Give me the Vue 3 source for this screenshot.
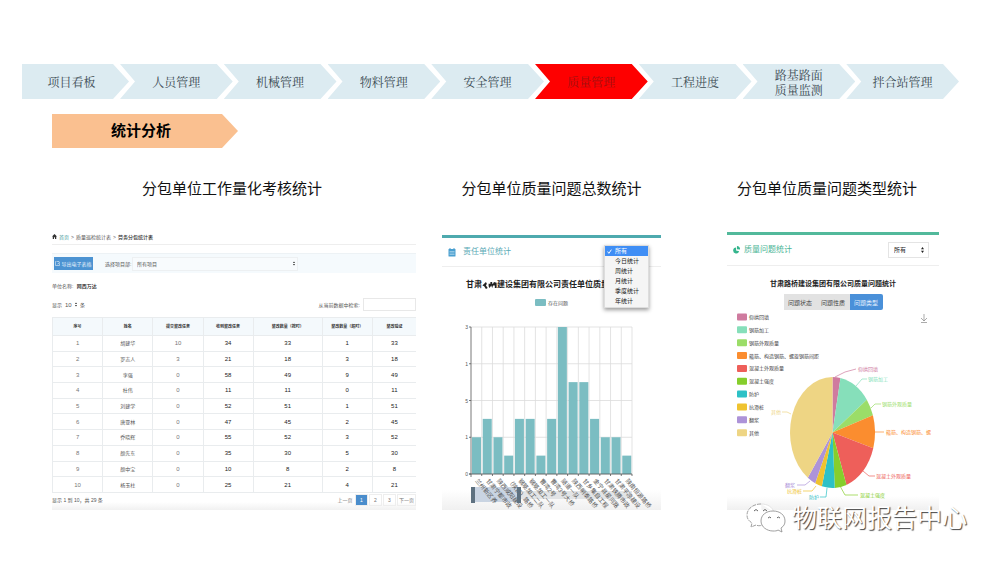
<script setup>
const nav = [
  { lines: ['项目看板'] },
  { lines: ['人员管理'] },
  { lines: ['机械管理'] },
  { lines: ['物料管理'] },
  { lines: ['安全管理'] },
  { lines: ['质量管理'], active: true },
  { lines: ['工程进度'] },
  { lines: ['路基路面', '质量监测'] },
  { lines: ['拌合站管理'] }
]

const headers = ['序号', '姓名', '提交整改任务', '收到整改任务', '整改数量（按时）', '整改数量（超时）', '整改验证']
const rows = [
  [1, '胡建华', 10, 34, 33, 1, 33],
  [2, '罗志人', 3, 21, 18, 3, 18],
  [3, '李强', 0, 58, 49, 9, 49],
  [4, '杜伟', 0, 11, 11, 0, 11],
  [5, '刘建学', 0, 52, 51, 1, 51],
  [6, '唐亚林', 0, 47, 45, 2, 45],
  [7, '乔晓辉', 0, 55, 52, 3, 52],
  [8, '颜先东', 0, 35, 30, 5, 30],
  [9, '颜中宝', 0, 10, 8, 2, 8],
  [10, '杨玉柱', 0, 25, 21, 4, 21]
]

const periods = ['所有', '今日统计', '周统计', '月统计', '季度统计', '年统计']

const names = ['兰州新区养', '甘肃宁都市政', '陕西咸阳建设', '（陕西）路桥', '钢筋加工二队', '钢筋加工一队', '曹湾2号', '曹湾3号大桥', '隧道一队', '陕西明泰路桥', '甘乡集自工程', '金宁县星河路', '甘肃铁腾市政', '甘肃平凉建设', '陕南恒源路桥']
const values = [2, 3, 2, 1, 3, 3, 1, 3, 8, 5, 5, 3, 2, 2, 1]
const slot = 161 / 15
const unit = 147 / 8
const bars = values.map((v, i) => ({
  x: 29 + i * slot + 1,
  y: 154 - v * unit,
  h: v * unit,
  name: names[i],
  tx: 29 + i * slot + 4
}))
const ticks = [
  { y: 7, t: '3' },
  { y: 43.75, t: '1' },
  { y: 80.5, t: '5' },
  { y: 117.25, t: '1' },
  { y: 154, t: '0' }
]

const slices = [
  { n: '仰拱回填', c: '#cf7b9f', to: 10.8, x: 131, y: 61, line: '108,67 118,62 129,59' },
  { n: '钢筋加工', c: '#86dfba', to: 53.8, x: 141, y: 71, line: '129,76 135,69 140,69' },
  { n: '钢筋外观质量', c: '#9bdd68', to: 72, x: 155, y: 96, line: '144,98 148,94 154,94' },
  { n: '箍筋、构造钢筋、螺旋钢筋间距', label: '箍筋、构造钢筋、螺', c: '#fb8d2f', to: 106.5, x: 159, y: 124, line: '148,122 157,122' },
  { n: '混凝土外观质量', c: '#ee5f5a', to: 160.8, x: 149, y: 168, line: '136,161 142,166 148,166' },
  { n: '混凝土强度', c: '#86ce2c', to: 177, x: 133, y: 187, line: '113,176 118,185 131,185' },
  { n: '防护', c: '#2dc1c6', to: 194.5, x: 82, y: 189, line: '100,178 99,187 93,187' },
  { n: '抗滑桩', c: '#efc330', to: 204, x: 60, y: 183, line: '89,176 85,181 76,181' },
  { n: '翻浆', c: '#ad93d8', to: 215.5, x: 58, y: 177, line: '83,171 78,175 70,175' },
  { n: '其他', c: '#eed584', to: 360, x: 44, y: 104, line: '64,104 60,102 55,102' }
]
const at = (deg) => {
  const r = (deg * Math.PI) / 180
  return `${(105.5 + 42.5 * Math.sin(r)).toFixed(2)} ${(122.5 - 55.5 * Math.cos(r)).toFixed(2)}`
}
slices.forEach((s, i) => {
  const from = i ? slices[i - 1].to : 0
  s.d = `M105.5 122.5L${at(from)}A42.5 55.5 0 ${s.to - from > 180 ? 1 : 0} 1 ${at(s.to)}Z`
})
</script>

<template>
  <main class="page">
    <nav>
      <ul class="steps">
        <li v-for="(s, i) in nav" :key="i" class="step" :class="{ active: s.active, first: i === 0 }">
          <a href="#"><span v-for="l in s.lines" :key="l">{{ l }}</span></a>
        </li>
      </ul>
    </nav>
    <h1 class="tag">统计分析</h1>

    <div class="columns">
      <section class="left">
        <h2>分包单位工作量化考核统计</h2>
        <div class="work">
          <div class="crumbs">
            <svg class="home" viewBox="0 0 10 10"><path d="M5 0L10 5H8.500V10H6V6.500H4V10H1.500V5H0Z" fill="#333" /></svg>
            <a href="#">首页</a><span>&gt;</span><span>质量巡检统计表</span><span>&gt;</span><b>劳务分包统计表</b>
          </div>
          <div class="toolbar">
            <button class="export" type="button">
              <svg viewBox="0 0 10 10"><path d="M3 1H1V9H9V5M4 1H8L9 4L5 6" fill="none" stroke="#fff" /></svg>导出电子表格
            </button>
            <label for="project">选择项目部:</label>
            <div class="pick">
              <select id="project"><option>所有项目</option></select>
              <svg viewBox="0 0 4 8"><path d="M2 0L4 3H0ZM2 8L0 5H4Z" fill="#222" /></svg>
            </div>
          </div>
          <p class="unit">单位名称: <b>网西万达</b></p>
          <div class="filter">
            <label class="len">显示
              <select><option>10</option></select>
              <svg viewBox="0 0 4 8"><path d="M2 0L4 3H0ZM2 8L0 5H4Z" fill="#222" /></svg>
              条</label>
            <label class="search">从当前数据中检索: <input type="text" /></label>
          </div>
          <table>
            <thead><tr><th v-for="h in headers" :key="h">{{ h }}</th></tr></thead>
            <tbody>
              <tr v-for="r in rows" :key="r[0]"><td v-for="(c, i) in r" :key="i">{{ c }}</td></tr>
            </tbody>
          </table>
          <div class="foot">
            <span>显示 1 到 10，共 29 条</span>
            <div class="pager">
              <button type="button" class="plain">上一页</button>
              <button type="button" class="on">1</button>
              <button type="button">2</button>
              <button type="button">3</button>
              <button type="button" class="wide">下一页</button>
            </div>
          </div>
        </div>
      </section>

      <section class="mid">
        <h2>分包单位质量问题总数统计</h2>
        <div class="card teal">
          <header>
            <svg class="ico" viewBox="0 0 16 18"><rect x="1" y="2" width="14" height="15" rx="1" fill="#4a9fd0" /><path d="M4 0V4M12 0V4" stroke="#4a9fd0" stroke-width="2" /><path d="M3 7H13M3 10H13M3 13H13" stroke="#d8edf7" /></svg>
            <h3>责任单位统计</h3>
            <select class="under" aria-label="统计周期"><option>所有</option></select>
            <ul class="menu" role="listbox" aria-label="统计周期">
              <li v-for="(p, i) in periods" :key="p" role="option" :aria-selected="i === 0">
                <svg viewBox="0 0 8 8"><path v-if="i === 0" d="M1 4L3 7L7 1" fill="none" stroke="#fff" stroke-width="1.500" /></svg>{{ p }}
              </li>
            </ul>
          </header>
          <h4>甘肃<svg class="smudge" viewBox="0 0 16 9"><path d="M0 5L4 1L5 3L4 5L6 8L4 9L2 6ZM7 3H9V1H11V3H12L13 1L16 2V8H14V5H12L11 8L10 5L8 8L7 6Z" fill="#222" /></svg>建设集团有限公司责任单位质量</h4>
          <p class="key"><i></i>存在问题</p>
          <svg class="chart" viewBox="0 0 219 190">
            <g stroke="#dcdcdc" stroke-width="0.800">
              <path v-for="t in ticks" :key="t.y" :d="`M29 ${t.y}H190`" />
              <path v-for="n in 15" :key="n" :d="`M${29 + n * slot} 7V154`" />
            </g>
            <rect v-for="b in bars" :key="b.name" :x="b.x" :y="b.y" width="9" :height="b.h" fill="#7bbdc2" />
            <path d="M29 7V157M27 154H190" stroke="#555" stroke-width="0.800" />
            <g stroke="#555" stroke-width="0.800">
              <path v-for="t in ticks" :key="t.y" :d="`M27 ${t.y}H29`" />
              <path v-for="n in 15" :key="n" :d="`M${29 + n * slot} 154V156`" />
            </g>
            <text v-for="t in ticks" :key="t.y" x="26" :y="t.y + 2" text-anchor="end" class="num">{{ t.t }}</text>
            <rect x="29" y="171" width="161" height="8" fill="#e2e4e6" />
            <rect x="31" y="167" width="46" height="15" fill="#c9d4e2" />
            <text v-for="b in bars" :key="b.name" class="name" :transform="`translate(${b.tx} 161) rotate(50)`">{{ b.name }}</text>
            <rect x="29" y="167" width="4" height="16" fill="#5e7180" />
            <rect x="75" y="167" width="4" height="16" fill="#5e7180" />
          </svg>
        </div>
      </section>

      <section class="right">
        <h2>分包单位质量问题类型统计</h2>
        <div class="card green">
          <header>
            <svg class="pieico" viewBox="0 0 16 18"><path d="M7 3A7 7 0 1 0 14 12L7 10Z" fill="#35b58d" /><path d="M9 0A7 7 0 0 1 16 8L9 7.500Z" fill="#35b58d" /></svg>
            <h3>质量问题统计</h3>
            <div class="range">
              <select aria-label="范围"><option>所有</option></select>
              <svg viewBox="0 0 4 8"><path d="M2 0L4 3H0ZM2 8L0 5H4Z" fill="#222" /></svg>
            </div>
          </header>
          <h4>甘肃路桥建设集团有限公司质量问题统计</h4>
          <div class="tabs">
            <button type="button">问题状态</button><button type="button">问题性质</button><button type="button" class="on">问题类型</button>
          </div>
          <svg class="pie" viewBox="0 0 212 200">
            <path d="M197 4V11M194 8L197 11L200 8M194 12.500H200" fill="none" stroke="#888" stroke-width="0.700" />
            <g v-for="(s, i) in slices" :key="s.n">
              <rect x="10" :y="3.500 + i * 12.850" width="10" height="7" rx="1" :fill="s.c" />
              <text x="22" :y="9 + i * 12.850" fill="#444">{{ s.n }}</text>
              <path :d="s.d" :fill="s.c" />
              <polyline :points="s.line" fill="none" :stroke="s.c" stroke-width="0.700" />
              <text :x="s.x" :y="s.y" :fill="s.c">{{ s.label || s.n }}</text>
            </g>
          </svg>
        </div>
      </section>
    </div>

    <div class="mark">
      <svg viewBox="0 0 40 30">
        <g fill="#fff" stroke="#888" stroke-width="0.800">
          <path d="M15 1C7 1 1 6 1 12C1 16 3 18 6 20L5 24L10 22C12 23 14 23 17 22" stroke-dasharray="4 1" />
          <path d="M15 1C22 1 26 4 28 9" stroke="#ddd" />
          <path d="M27 8C20 8 15 12 15 18C15 24 21 28 27 28C29 28 31 28 32 27L36 29L35 25C38 23 39 21 39 18C39 12 34 8 27 8Z" />
        </g>
        <path d="M8 8Q10 5 12 8M17 8Q19 5 21 8M22 15Q24 13 25 15M31 15Q32 13 34 15" fill="none" stroke="#666" />
      </svg>
      <span>物联网报告中心</span>
    </div>
  </main>
</template>

<style>
body { margin: 0; background: #fff; }
</style>

<style scoped>
* { box-sizing: border-box; }
.page {
  position: relative;
  min-height: 100vh;
  padding-top: 64px;
  font-family: "Liberation Sans", "Noto Sans CJK SC", sans-serif;
  color: #222;
}
h1, h2, h3, h4, p, ul { margin: 0; padding: 0; }
ul { list-style: none; }
a { color: inherit; text-decoration: none; }
button, select, input { font: inherit; color: inherit; margin: 0; padding: 0; border: 0; border-radius: 0; background: none; appearance: none; }
svg { display: block; flex: none; }

.steps { display: flex; padding: 0 41px 0 22px; }
.step { flex: 1; height: 35px; margin-right: -9px; background: #dcebf1; clip-path: polygon(0 0, calc(100% - 16px) 0, 100% 50%, calc(100% - 16px) 100%, 0 100%, 15px 50%); }
.step:last-child { margin-right: 0; }
.step.first { flex: 0 0 107px; clip-path: polygon(0 0, calc(100% - 16px) 0, 100% 50%, calc(100% - 16px) 100%, 0 100%); }
.step a { height: 100%; display: flex; flex-direction: column; align-items: center; justify-content: center; font: 12px/15px "Noto Serif CJK SC", "Noto Sans CJK SC", serif; color: #3a4a52; }
.step.first a { padding-right: 8px; }
.step.active { background: #fe0000; }
.step.active a { color: #a01010; }

.tag { width: 186px; height: 34px; margin: 15px 0 0 52px; padding-right: 8px; background: #fac090; clip-path: polygon(0 0, calc(100% - 16px) 0, 100% 50%, calc(100% - 16px) 100%, 0 100%); font-size: 15px; line-height: 34px; text-align: center; color: #000; }

.columns { display: grid; grid-template-columns: 364fr 219fr 252fr; column-gap: 26px; padding: 0 61px 0 52px; margin-top: 31px; }
.right { padding-left: 40px; }
h2 { font-size: 15px; line-height: 20px; font-weight: 400; text-align: center; white-space: nowrap; color: #111; }
.left h2 { padding-right: 4px; }
.right h2 { padding-right: 12px; }

.work { margin-top: 30px; padding-bottom: 4px; font-size: 5px; line-height: 12px; color: #555; background: linear-gradient(#fff, #f1f1f1) bottom / 100% 8px no-repeat; }
.crumbs { height: 16px; display: flex; align-items: center; gap: 2px; border-bottom: 1px solid #eee; }
.crumbs b { color: #333; font-weight: 500; }
.crumbs a { color: #3f9a9a; }
.home { width: 5px; height: 5px; }
.toolbar { margin-top: 8px; height: 20px; padding-left: 2px; display: flex; align-items: center; background: #f5fafd; border-top: 1px solid #edf2f5; }
.export { width: 39px; height: 13px; display: flex; align-items: center; justify-content: center; gap: 1px; background: #4c93d2; color: #e8f3fc; }
.export svg { width: 5px; height: 5px; }
.toolbar label { margin-left: 12px; width: 27px; white-space: nowrap; }
.pick { flex: 1; display: flex; align-items: center; height: 14px; margin-right: 118px; padding: 0 2px 0 4px; border: 1px solid #edf0f2; background: #f8fbfd; }
.pick select { flex: 1; }
.pick svg, .len svg { width: 2px; height: 5px; }
.unit { margin-top: 7px; }
.unit b { margin-left: 2px; font-weight: 500; color: #222; }
.filter { margin-top: 6px; height: 13px; display: flex; justify-content: space-between; align-items: center; }
.len, .search { display: flex; align-items: center; gap: 3px; }
.len select { width: 7px; font-size: 6px; }
.search input { width: 53px; height: 13px; border: 1px solid #e8e8e8; }
table { width: 100%; height: 176px; margin-top: 6px; table-layout: fixed; border-collapse: collapse; line-height: 8px; text-align: center; }
th, td { padding: 0; border: 1px solid #e9ecee; }
th { height: 18px; font-size: 4px; color: #333; background: #f4f9fc; white-space: nowrap; }
th:nth-child(4) { width: 50px; }
th:nth-child(5) { width: 19%; }
th:nth-child(7) { width: 12%; }
td { font-size: 6px; color: #222; }
td:nth-child(-n+3) { color: #777; }
td:nth-child(2) { font-size: 5px; color: #555; }
tr > :last-child { border-right: 0; }
.foot { margin-top: 1px; height: 12px; display: flex; align-items: center; justify-content: space-between; }
.pager { display: flex; gap: 1px; color: #777; }
.pager button { width: 13px; height: 12px; border: 1px solid #eee; line-height: 10px; }
.pager .plain { width: 18px; border: 0; }
.pager .wide { width: 19px; }
.pager .on { background: #4a8dcc; color: #fff; }

.card header { position: relative; display: flex; align-items: center; border-bottom: 1px solid #eee; }
h3 { font-size: 8px; line-height: 12px; font-weight: 400; }
h4 { font-weight: 700; line-height: 12px; white-space: nowrap; }
.teal { margin-top: 36px; border-top: 3px solid #4eaaae; background: linear-gradient(#fff, #f0f0f0) bottom / 100% 20px no-repeat; }
.teal header { height: 29px; padding: 0 12px 0 6px; }
.ico { width: 8px; height: 9px; }
.teal h3 { margin-left: 7px; flex: 1; color: #58a9b5; }
.under { width: 42px; height: 12px; font-size: 6px; }
.menu { position: absolute; top: 7px; right: 12px; width: 45px; padding: 0 0 1px; background: #f5f5f5; border: 1px solid #ddd; box-shadow: 0 2px 4px rgba(0, 0, 0, .4); font-size: 6px; line-height: 10px; color: #222; z-index: 1; }
.menu li { display: flex; align-items: center; gap: 3px; padding-left: 2px; }
.menu svg { width: 5px; height: 5px; }
.menu li:first-child { background: #3f8ef5; color: #fff; }
.teal h4 { display: flex; align-items: center; margin: 12px 0 0 24px; font-size: 8px; color: #222; }
.smudge { width: 15px; height: 8px; }
.key { display: flex; align-items: center; justify-content: center; gap: 2px; height: 12px; margin-top: 5px; font-size: 5px; color: #555; }
.key i { width: 11px; height: 7px; border-radius: 1px; background: #7bbdc2; }
.chart { width: 100%; margin-top: 12px; overflow: visible; }
.num { font-size: 5px; fill: #555; }
.name { font-size: 6px; fill: #555; }

.green { margin-top: 33px; border-top: 3px solid #52b99b; background: linear-gradient(#fff, #f0f0f0) bottom / 100% 14px no-repeat; }
.green header { height: 31px; padding: 0 10px 0 6px; }
.pieico { width: 7px; height: 8px; }
.green h3 { margin-left: 4px; flex: 1; color: #4bb596; }
.range { width: 41px; height: 16px; display: flex; align-items: center; padding: 0 4px 0 5px; border: 1px solid #e4e4e4; font-size: 6px; }
.range select { flex: 1; width: 0; }
.range svg { width: 3px; height: 6px; }
.green h4 { margin-top: 12px; font-size: 7px; text-align: center; color: #222; }
.tabs { display: flex; justify-content: center; margin-top: 4px; font-size: 6px; color: #444; }
.tabs button { width: 33px; height: 16px; background: #e2e2e2; }
.tabs .on { background: #4a90d9; color: #e6f2ff; border-radius: 0 2px 2px 0; }
.pie { width: 100%; font-size: 5px; }

.mark { position: absolute; top: 502px; right: 33px; display: flex; align-items: center; gap: 6px; font-size: 25px; line-height: 32px; color: #fff; text-shadow: 1px 1px 1px #444; }
.mark svg { width: 40px; height: 30px; }
</style>
